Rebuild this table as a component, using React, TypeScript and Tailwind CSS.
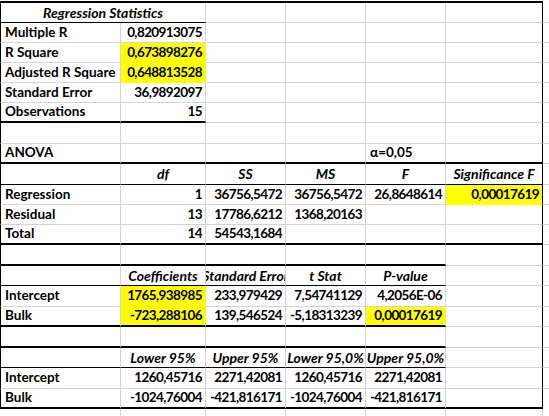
import React from 'react';

// Excel-like regression output sheet (Analysis ToolPak style)

type Align = 'l' | 'r' | 'c';
type Bottom = 'g' | 't' | 'k' | 'n';

interface CellDef {
  t?: string;
  a?: Align;
  i?: boolean;
  y?: boolean;
  b?: Bottom;
  span?: number;
}

interface RowDef {
  h: string;
  cells: CellDef[];
  outer?: boolean; // inside the black outer box
}

const W = ['w-[121px]', 'w-[85px]', 'w-[80px]', 'w-[80px]', 'w-[80px]', 'w-[97px]', 'w-[6px]'];

const BOTTOM: Record<Bottom, string> = {
  g: 'border-b border-b-[#d4d4d4]',
  t: 'border-b border-b-black',
  k: 'border-b-2 border-b-black',
  n: '',
};

const ALIGN: Record<Align, string> = {
  l: 'justify-start pl-[4px] text-[13.5px]',
  r: 'justify-end pr-[3px] text-[13.5px] tracking-[-0.6px]',
  c: 'justify-center text-[14px]',
};

// helpers
const L = (t: string, b: Bottom = 'g'): CellDef => ({ t, a: 'l', b });
const N = (t: string, b: Bottom = 'g', y = false): CellDef => ({ t, a: 'r', b, y });
const H = (t: string, b: Bottom = 't'): CellDef => ({ t, a: 'c', i: true, b });
const E = (b: Bottom = 'g'): CellDef => ({ b });

const ROWS: RowDef[] = [
  { h: 'h-[20px]', outer: true, cells: [{ t: 'Regression Statistics', a: 'c', i: true, b: 't', span: 2 }, E(), E(), E(), E(), E()] },
  { h: 'h-[20px]', outer: true, cells: [L('Multiple R'), N('0,820913075'), E(), E(), E(), E(), E()] },
  { h: 'h-[20px]', outer: true, cells: [L('R Square'), N('0,673898276', 'g', true), E(), E(), E(), E(), E()] },
  { h: 'h-[20px]', outer: true, cells: [L('Adjusted R Square'), N('0,648813528', 'g', true), E(), E(), E(), E(), E()] },
  { h: 'h-[20px]', outer: true, cells: [L('Standard Error'), N('36,9892097'), E(), E(), E(), E(), E()] },
  { h: 'h-[20px]', outer: true, cells: [L('Observations', 'k'), N('15', 'k'), E(), E(), E(), E(), E()] },
  { h: 'h-[21px]', outer: true, cells: [E(), E(), E(), E(), E(), E(), E()] },
  { h: 'h-[20px]', outer: true, cells: [L('ANOVA', 'k'), E('k'), E('k'), E('k'), L('α=0,05', 'k'), E('k'), E()] },
  { h: 'h-[21px]', outer: true, cells: [E('t'), H('df'), H('SS'), H('MS'), H('F'), H('Significance F'), E()] },
  { h: 'h-[20px]', outer: true, cells: [L('Regression'), N('1'), N('36756,5472'), N('36756,5472'), N('26,8648614'), N('0,00017619', 'g', true), E()] },
  { h: 'h-[20px]', outer: true, cells: [L('Residual'), N('13'), N('17786,6212'), N('1368,20163'), E(), E(), E()] },
  { h: 'h-[20px]', outer: true, cells: [L('Total', 'k'), N('14', 'k'), N('54543,1684', 'k'), E('k'), E('k'), E('k'), E()] },
  { h: 'h-[21px]', outer: true, cells: [E('k'), E('k'), E('k'), E('k'), E('k'), E(), E()] },
  { h: 'h-[20px]', outer: true, cells: [E('t'), H('Coefficients'), H('Standard Error'), H('t Stat'), H('P-value'), E(), E()] },
  { h: 'h-[21px]', outer: true, cells: [L('Intercept'), N('1765,938985', 'g', true), N('233,979429'), N('7,54741129'), N('4,2056E-06'), E(), E()] },
  { h: 'h-[20px]', outer: true, cells: [L('Bulk', 'k'), N('-723,288106', 'k', true), N('139,546524', 'k'), N('-5,18313239', 'k'), N('0,00017619', 'k', true), E(), E()] },
  { h: 'h-[21px]', outer: true, cells: [E('k'), E('k'), E('k'), E('k'), E('k'), E(), E()] },
  { h: 'h-[20px]', outer: true, cells: [E('t'), H('Lower 95%'), H('Upper 95%'), H('Lower 95,0%'), H('Upper 95,0%'), E(), E()] },
  { h: 'h-[21px]', outer: true, cells: [L('Intercept'), N('1260,45716'), N('2271,42081'), N('1260,45716'), N('2271,42081'), E(), E()] },
  { h: 'h-[20px]', outer: true, cells: [L('Bulk', 'k'), N('-1024,76004', 'k'), N('-421,816171', 'k'), N('-1024,76004', 'k'), N('-421,816171', 'k'), E('k'), E('n')] },
  { h: 'h-[7px]', cells: [E('n'), E('n'), E('n'), E('n'), E('n'), E('n'), E('n')] },
];

function SheetRow({ row }: { row: RowDef }) {
  let col = 0;
  return (
    <div className={`flex ${row.h}`}>
      {row.cells.map((c, idx) => {
        const start = col;
        const span = c.span ?? 1;
        col += span;
        const width = span === 2 ? 'w-[206px]' : W[start];
        const last = start + span - 1;

        let right = 'border-r border-r-[#d4d4d4]';
        if (row.outer && last === 5) right = 'border-r border-r-black';
        else if (c.y) right = 'border-r border-r-[#ffff00]';
        if (last === 6) right = '';

        let bottom = BOTTOM[c.b ?? 'g'];
        if (c.y && c.b === 'g') bottom = 'border-b border-b-[#ffff00]';

        const left = row.outer && start === 0 ? 'border-l border-l-black' : '';

        return (
          <div
            key={idx}
            className={`${width} shrink-0 h-full flex items-center overflow-hidden whitespace-nowrap ${left} ${right} ${bottom} ${
              c.y ? 'bg-[#ffff00]' : ''
            } ${ALIGN[c.a ?? 'l']} ${c.i ? 'italic' : ''}`}
          >
            {c.t}
          </div>
        );
      })}
    </div>
  );
}

export default function App() {
  return (
    <div
      className="w-[549px] h-[416px] overflow-hidden bg-white text-black font-bold leading-none"
      style={{ fontFamily: 'Lato, "Open Sans", sans-serif' }}
    >
      {/* top edge of the table */}
      <div className="flex h-[3px]">
        <div className="w-[543px] border-b-2 border-b-black" />
        <div className="w-[6px]" />
      </div>
      {ROWS.map((r, i) => (
        <SheetRow key={i} row={r} />
      ))}
    </div>
  );
}
